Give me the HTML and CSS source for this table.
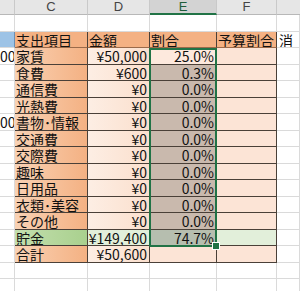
FILE: index.html
```html
<!DOCTYPE html>
<html lang="ja">
<head>
<meta charset="utf-8">
<link rel="stylesheet" href="styles.css">
</head>
<body>
<div class="sheet">
  <div class="grid">
    <div class="ch"></div><div class="ch">C</div><div class="ch">D</div><div class="ch ch-sel">E</div><div class="ch">F</div><div class="ch ch-last"></div>

    <div class="g"></div><div class="g"></div><div class="g"></div><div class="g"></div><div class="g"></div><div class="g"></div>

    <div class="g blue"></div><div class="t c hd">支出項目</div><div class="t hd">金額</div><div class="t hd">割合</div><div class="t hd">予算割合</div><div class="g">消</div>

    <div class="g num">00</div><div class="t c">家賃</div><div class="t d num">¥50,000</div><div class="t e num act">25.0%</div><div class="t f"></div><div class="g"></div>
    <div class="g"></div><div class="t c">食費</div><div class="t d num">¥600</div><div class="t e num">0.3%</div><div class="t f"></div><div class="g"></div>
    <div class="g"></div><div class="t c">通信費</div><div class="t d num">¥0</div><div class="t e num">0.0%</div><div class="t f"></div><div class="g"></div>
    <div class="g"></div><div class="t c">光熱費</div><div class="t d num">¥0</div><div class="t e num">0.0%</div><div class="t f"></div><div class="g"></div>
    <div class="g num">00</div><div class="t c">書物･情報</div><div class="t d num">¥0</div><div class="t e num">0.0%</div><div class="t f"></div><div class="g"></div>
    <div class="g"></div><div class="t c">交通費</div><div class="t d num">¥0</div><div class="t e num">0.0%</div><div class="t f"></div><div class="g"></div>
    <div class="g"></div><div class="t c">交際費</div><div class="t d num">¥0</div><div class="t e num">0.0%</div><div class="t f"></div><div class="g"></div>
    <div class="g"></div><div class="t c">趣味</div><div class="t d num">¥0</div><div class="t e num">0.0%</div><div class="t f"></div><div class="g"></div>
    <div class="g"></div><div class="t c">日用品</div><div class="t d num">¥0</div><div class="t e num">0.0%</div><div class="t f"></div><div class="g"></div>
    <div class="g"></div><div class="t c">衣類･美容</div><div class="t d num">¥0</div><div class="t e num">0.0%</div><div class="t f"></div><div class="g"></div>
    <div class="g"></div><div class="t c">その他</div><div class="t d num">¥0</div><div class="t e num">0.0%</div><div class="t f"></div><div class="g"></div>
    <div class="g"></div><div class="t c green">貯金</div><div class="t d lgreen num">¥149,400</div><div class="t e egreen num">74.7%</div><div class="t f lgreen"></div><div class="g"></div>
    <div class="g"></div><div class="t c">合計</div><div class="t d num">¥50,600</div><div class="t f"></div><div class="t f"></div><div class="g"></div>

    <div class="g"></div><div class="g"></div><div class="g"></div><div class="g"></div><div class="g"></div><div class="g"></div>
    <div class="g"></div><div class="g"></div><div class="g"></div><div class="g"></div><div class="g"></div><div class="g"></div>
  </div>
  <div class="selection"><div class="handle"></div></div>
</div>
</body>
</html>
```

FILE: styles.css
```css
html, body {
  margin: 0;
  padding: 0;
  background: #ffffff;
}
body {
  width: 300px;
  height: 291px;
  overflow: hidden;
  font-family: "Noto Sans CJK JP", "Noto Sans", sans-serif;
  font-size: 14px;
  color: #111;
}
.sheet {
  position: relative;
  width: 300px;
  height: 291px;
  overflow: hidden;
}
.grid {
  display: grid;
  grid-template-columns: 15px 73px 62px 67px 60px 23px;
  grid-template-rows: 15px repeat(17, 16.5px);
}
.grid > div {
  box-sizing: border-box;
  overflow: hidden;
  white-space: nowrap;
  line-height: 16px;
}
.ch {
  background: #e6e6e6;
  border-right: 1px solid #c9c9c9;
  border-bottom: 1px solid #b8b8b8;
  color: #444;
  font-family: "Liberation Sans", Arial, sans-serif;
  font-size: 13px;
  text-align: center;
  line-height: 14px !important;
}
.ch-last { border-right: none; }
.ch-sel {
  background: #d3d3d3;
  border-bottom: 2px solid #217346;
  color: #1e5c3a;
}
.g {
  border-right: 1px solid #dadada;
  border-bottom: 1px solid #dadada;
  padding-left: 2px;
}
.blue {
  background: #9dc3e6;
  border-right-color: #6a8fb3;
}
.num {
  text-align: right;
  padding: 0 2px 0 0 !important;
}
.t {
  border-right: 1px solid #4a4038;
  border-bottom: 1px solid #4a4038;
  padding-left: 1px;
}
.hd {
  background: #f4b183;
  border-bottom-color: #9a6a4a !important;
}
.c {
  background: linear-gradient(to right, #f9d2b4, #f4b183);
}
.c.hd {
  background: #f4b183;
}
.d {
  background: linear-gradient(to right, #fdeee4, #fbdfcd);
}
.e {
  background: #c9b9ad;
}
.e.act {
  background: #fde9dd;
}
.f {
  background: #fce4d6;
}
.green {
  background: linear-gradient(to right, #c3dfae, #a9d08e);
}
.lgreen {
  background: #e2efda;
}
.egreen {
  background: #b6beaf;
}
.selection {
  position: absolute;
  left: 149px;
  top: 47.5px;
  width: 68px;
  height: 199px;
  box-sizing: border-box;
  border: 2px solid #217346;
  pointer-events: none;
}
.handle {
  position: absolute;
  right: -5px;
  bottom: -5px;
  width: 6px;
  height: 6px;
  background: #217346;
  border: 1px solid #ffffff;
}
```
